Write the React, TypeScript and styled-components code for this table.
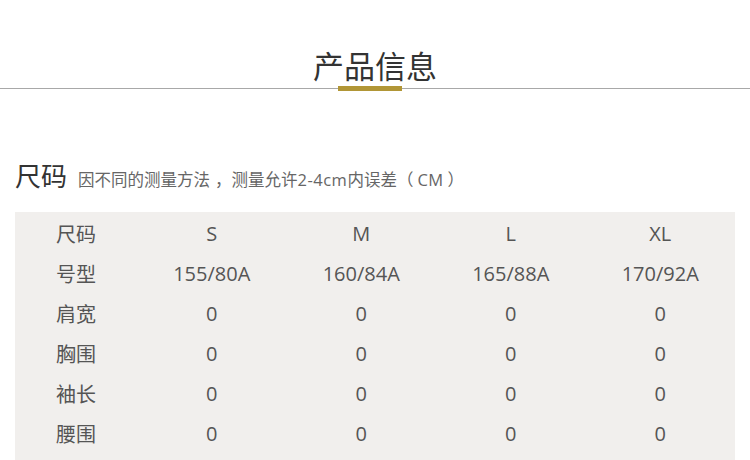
import React from "react";
import styled, { createGlobalStyle } from "styled-components";

const GlobalStyle = createGlobalStyle`
  html, body { margin: 0; padding: 0; background: #ffffff; }
  body { font-family: "Open Sans", "Noto Sans CJK SC", sans-serif; }
`;

const Page = styled.div`
  width: 750px;
  padding-top: 49px;
`;

const Header = styled.header`
  display: flex;
  flex-direction: column;
  align-items: stretch;
`;

const Title = styled.h2`
  margin: 0;
  text-align: center;
  font-size: 31px;
  line-height: 1;
  font-weight: 400;
  color: #333333;
  font-family: "Noto Sans CJK SC", sans-serif;
`;

const Rule = styled.div`
  margin-top: 6px;
  height: 5px;
  display: flex;
  justify-content: center;
  padding-right: 10px;
  background: linear-gradient(
    to bottom,
    transparent 2px,
    #a8a8a8 2px,
    #a8a8a8 3px,
    transparent 3px
  );
`;

const GoldBar = styled.div`
  width: 64px;
  height: 5px;
  background: #b19636;
`;

const Section = styled.section`
  padding: 0 15px;
  margin-top: 71px;
`;

const SectionHead = styled.div`
  display: flex;
  align-items: baseline;
  gap: 11px;
`;

const HeadTitle = styled.h3`
  margin: 0;
  font-size: 26px;
  line-height: 1;
  font-weight: 400;
  color: #333333;
  font-family: "Noto Sans CJK SC", sans-serif;
`;

const HeadNote = styled.span`
  font-size: 16.5px;
  color: #666666;
  font-family: "Open Sans", "Noto Sans CJK SC", sans-serif;
`;

const Punct = styled.span<{ $before?: number; $after?: number }>`
  padding-left: ${(p) => p.$before ?? 0}px;
  padding-right: ${(p) => p.$after ?? 0}px;
`;

const Latin = styled.span`
  letter-spacing: 0.5px;
`;

const Table = styled.div`
  margin-top: 21px;
  background: #f1efed;
  padding: 1px 0 10px;
  display: grid;
  grid-template-columns: 122px repeat(4, 149.5px);
  width: 720px;
`;

const Cell = styled.div`
  height: 40px;
  display: flex;
  align-items: center;
  justify-content: center;
  font-size: 20px;
  color: #555555;
  font-family: "Open Sans", "Noto Sans CJK SC", sans-serif;
`;

const rows: string[][] = [
  ["尺码", "S", "M", "L", "XL"],
  ["号型", "155/80A", "160/84A", "165/88A", "170/92A"],
  ["肩宽", "0", "0", "0", "0"],
  ["胸围", "0", "0", "0", "0"],
  ["袖长", "0", "0", "0", "0"],
  ["腰围", "0", "0", "0", "0"],
];

export default function App() {
  return (
    <Page>
      <GlobalStyle />
      <Header>
        <Title>产品信息</Title>
        <Rule>
          <GoldBar />
        </Rule>
      </Header>
      <Section>
        <SectionHead>
          <HeadTitle>尺码</HeadTitle>
          <HeadNote>
            因不同的测量方法<Punct $before={5}>，</Punct>测量允许<Latin>2-4cm</Latin>内误差
            <Punct $after={4}>（</Punct>
            <Latin>CM</Latin>
            <Punct $before={4}>）</Punct>
          </HeadNote>
        </SectionHead>
        <Table>
          {rows.map((r, i) =>
            r.map((c, j) => <Cell key={`${i}-${j}`}>{c}</Cell>)
          )}
        </Table>
      </Section>
    </Page>
  );
}
